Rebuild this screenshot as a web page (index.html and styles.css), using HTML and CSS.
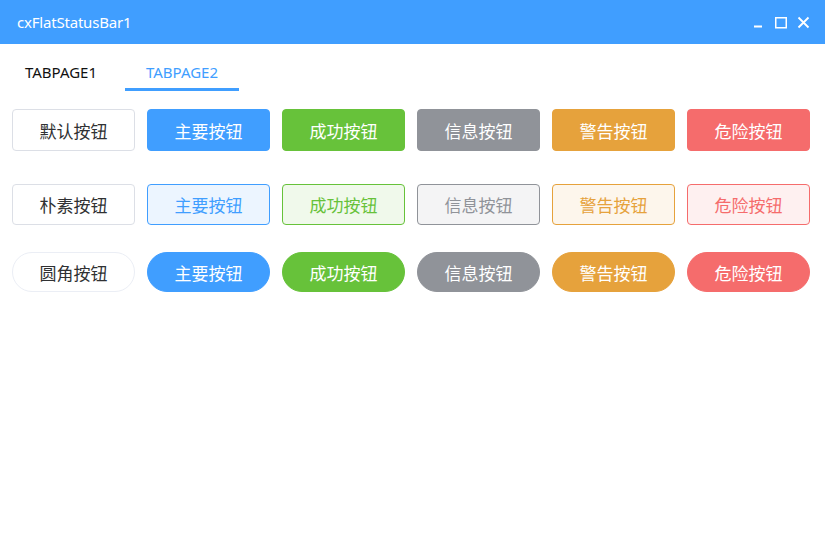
FILE: index.html
```html
<!DOCTYPE html>
<html lang="zh-CN">
<head>
<meta charset="utf-8">
<title>cxFlatStatusBar1</title>
<link rel="stylesheet" href="styles.css">
</head>
<body>
<div class="window">
  <header class="titlebar">
    <span class="title">cxFlatStatusBar1</span>
    <svg class="controls" width="60" height="44" viewBox="0 0 60 44">
      <rect x="2" y="25.5" width="8" height="2" fill="#fff"/>
      <rect x="23.75" y="17.75" width="10.5" height="10" fill="none" stroke="#fff" stroke-width="1.5"/>
      <path d="M46.5 17.5 L56.5 27.5 M56.5 17.5 L46.5 27.5" stroke="#fff" stroke-width="1.8" fill="none"/>
    </svg>
  </header>
  <nav class="tabs">
    <div class="tab">TABPAGE1</div>
    <div class="tab active">TABPAGE2</div>
  </nav>
  <main class="content">
    <div class="row row-normal">
      <button class="btn default">默认按钮</button>
      <button class="btn primary">主要按钮</button>
      <button class="btn success">成功按钮</button>
      <button class="btn info">信息按钮</button>
      <button class="btn warning">警告按钮</button>
      <button class="btn danger">危险按钮</button>
    </div>
    <div class="row row-plain">
      <button class="btn default">朴素按钮</button>
      <button class="btn plain-primary">主要按钮</button>
      <button class="btn plain-success">成功按钮</button>
      <button class="btn plain-info">信息按钮</button>
      <button class="btn plain-warning">警告按钮</button>
      <button class="btn plain-danger">危险按钮</button>
    </div>
    <div class="row row-round">
      <button class="btn default round-default">圆角按钮</button>
      <button class="btn primary">主要按钮</button>
      <button class="btn success">成功按钮</button>
      <button class="btn info">信息按钮</button>
      <button class="btn warning">警告按钮</button>
      <button class="btn danger">危险按钮</button>
    </div>
  </main>
</div>
</body>
</html>
```
FILE: styles.css
```css
* { box-sizing: border-box; }
html, body {
  margin: 0;
  padding: 0;
  background: #fff;
  font-family: "Noto Sans", "Noto Sans CJK SC", sans-serif;
}
.window {
  width: 825px;
  height: 546px;
  background: #fff;
}
.titlebar {
  height: 44px;
  background: #409eff;
  display: flex;
  align-items: center;
  justify-content: space-between;
  padding-left: 17px;
  padding-right: 13px;
}
.title {
  color: #fff;
  font-size: 15px;
  line-height: 20px;
  letter-spacing: -0.2px;
}
.controls { display: block; }
.tabs {
  display: flex;
  gap: 7px;
  padding-left: 4px;
}
.tab {
  width: 114px;
  text-align: center;
  font-size: 15px;
  line-height: 20px;
  padding-top: 18px;
  padding-bottom: 6px;
  border-bottom: 3px solid transparent;
  color: #111;
}
.tab.active {
  color: #409eff;
  border-bottom-color: #409eff;
}
.content {
  padding-left: 12px;
  display: flex;
  flex-direction: column;
}
.row {
  display: flex;
  gap: 12px;
}
.row-normal { margin-top: 18px; }
.row-plain { margin-top: 33px; }
.row-round { margin-top: 27px; }
.btn {
  width: 123px;
  margin: 0;
  padding: 0;
  font-family: "Noto Sans CJK SC", sans-serif;
  font-size: 17px;
  border: 1px solid transparent;
  border-radius: 4px;
  color: #fff;
  cursor: pointer;
}
.row-normal .btn { height: 42px; }
.row-plain .btn { height: 41px; }
.row-round .btn { height: 40px; border-radius: 20px; }
.default { background: #fff; border-color: #dcdfe6; color: #303133; }
.round-default { border-color: #ebeef5; }
.primary { background: #409eff; border-color: #409eff; }
.success { background: #67c23a; border-color: #67c23a; }
.info { background: #909399; border-color: #909399; }
.warning { background: #e6a23c; border-color: #e6a23c; }
.danger { background: #f56c6c; border-color: #f56c6c; }
.plain-primary { background: #ecf5ff; border-color: #409eff; color: #409eff; }
.plain-success { background: #f0f9eb; border-color: #67c23a; color: #67c23a; }
.plain-info { background: #f4f4f5; border-color: #909399; color: #909399; }
.plain-warning { background: #fdf6ec; border-color: #e6a23c; color: #e6a23c; }
.plain-danger { background: #fef0f0; border-color: #f56c6c; color: #f56c6c; }
```
